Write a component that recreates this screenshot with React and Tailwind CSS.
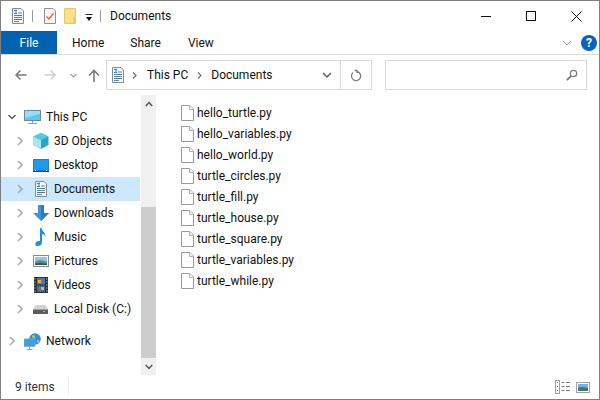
import React from "react";

function DocIcon({ s = 16 }) {
  return (
    <svg width={s} height={s} viewBox="0 0 16 16" className="shrink-0">
      <path d="M2.5 .5H11L13.5 3V15.5H2.5Z" fill="#f7f7f7" stroke="#8a8a8a" />
      <path d="M4 2.5h3M6 1.5v4M4 5.5h3" stroke="#2b88d8" fill="none" />
      <path d="M8 5h4M4 7.5h8M4 9.5h8M4 11.5h8M4 13.5h5" stroke="#4a90c8" />
      <path d="M8 7.5h4M4 11.5h8" stroke="#6a6a6a" />
    </svg>
  );
}

function CheckDoc() {
  return (
    <svg width="14" height="16" viewBox="0 0 14 16">
      <path d="M1.5 .5H10L12.5 3V15.5H1.5Z" fill="#f5f5f5" stroke="#8f8f8f" />
      <path d="M3.5 8.5L6 11L10.5 5.5" fill="none" stroke="#e0603a" strokeWidth="1.4" />
    </svg>
  );
}

function FolderQ() {
  return (
    <svg width="14" height="16" viewBox="0 0 14 16">
      <path d="M.5 .5H11.5V15.5H.5Z" fill="#fbe08c" stroke="#e8c766" />
      <path d="M11.5 6V15.5H9V10Z" fill="#eccb6e" />
    </svg>
  );
}

function PCIcon() {
  return (
    <svg width="17" height="16" viewBox="0 0 17 16" className="shrink-0">
      <rect x=".5" y="1.5" width="16" height="10" fill="#60c5f5" stroke="#6b8a9c" />
      <path d="M1 2h15v3L1 9Z" fill="#9adcf9" />
      <path d="M8.5 12v2M4 14.5h9" stroke="#8fa4b2" strokeWidth="1.2" />
    </svg>
  );
}

function CubeIcon() {
  return (
    <svg width="16" height="16" viewBox="0 0 16 16" className="shrink-0">
      <path d="M8 0L15.5 3.5V12L8 16L.5 12V3.5Z" fill="#1fa7c9" />
      <path d="M.5 3.5L8 7V16L.5 12Z" fill="#a9e7ef" />
      <path d="M8 0L15.5 3.5L8 7L.5 3.5Z" fill="#55c9dc" />
    </svg>
  );
}

function DesktopIcon() {
  return (
    <svg width="16" height="13" viewBox="0 0 16 13" className="shrink-0">
      <rect x="0" y="0" width="16" height="13" fill="#1d7fd3" />
      <rect x="1" y="1" width="14" height="10" fill="#1b9bee" />
      <path d="M0 12.5h16" stroke="#0d4f8c" />
      <path d="M2 11.5h1M13 11.5h1" stroke="#ffffff" />
    </svg>
  );
}

function DownloadIcon() {
  return (
    <svg width="16" height="16" viewBox="0 0 16 16" className="shrink-0">
      <path d="M5 0H11V8H16L8 16L0 8H5Z" fill="#3f94de" />
      <path d="M11 0V8H16L8 16V0Z" fill="#2a7cc7" />
    </svg>
  );
}

function MusicIcon() {
  return (
    <svg width="16" height="18" viewBox="0 0 16 18" className="shrink-0">
      <path d="M7 0H8.5C9 3.5 13 4.5 12.5 9C12 7 10.5 6 9 6V14.5C9 16.5 7 18 4.5 18C2.5 18 2 16.5 2.5 15.2C3.2 13.6 5.5 12.6 7 13.2Z" fill="#1e8fe0" />
    </svg>
  );
}

function PicIcon() {
  return (
    <svg width="16" height="12" viewBox="0 0 16 12" className="shrink-0">
      <rect x=".5" y=".5" width="15" height="11" fill="#fff" stroke="#8a8a8a" />
      <rect x="2" y="2" width="12" height="8" fill="#8fc6ee" />
      <path d="M2 7C5 4.5 9 5 14 7V10H2Z" fill="#5d8f7a" />
      <path d="M2 8.5C6 7.5 10 8 14 8.8V10H2Z" fill="#34566b" />
    </svg>
  );
}

function FilmIcon() {
  return (
    <svg width="14" height="16" viewBox="0 0 14 16" className="shrink-0">
      <rect width="14" height="16" fill="#2e2e2e" />
      <rect x="3" y="1" width="8" height="6.5" fill="#3d7fc0" />
      <rect x="3" y="8.5" width="8" height="6.5" fill="#3d6fa0" />
      <path d="M4 3h3v3H4ZM7 10h3v3H7Z" fill="#e3b53a" />
      <path d="M7 3h3v2H7ZM4 10h2v3H4Z" fill="#b8574a" />
      <path d="M1 1.5v1M1 4.5v1M1 7.5v1M1 10.5v1M1 13.5v1M12.8 1.5v1M12.8 4.5v1M12.8 7.5v1M12.8 10.5v1M12.8 13.5v1" stroke="#e8e8e8" />
    </svg>
  );
}

function DiskIcon() {
  return (
    <svg width="15" height="9" viewBox="0 0 15 9" className="shrink-0">
      <path d="M2.5 0H12.5L15 4.5H0Z" fill="#d2d2d2" />
      <rect x="0" y="4.5" width="15" height="4.5" fill="#5c5c5c" />
      <path d="M10 6.5h2" stroke="#5fe05f" />
    </svg>
  );
}

function NetIcon() {
  return (
    <svg width="17" height="17" viewBox="0 0 17 17" className="shrink-0">
      <circle cx="11" cy="6" r="5.8" fill="#2f8fd8" />
      <path d="M8 2.5C10 1 12 3 11 5C9.5 6 7.5 5 8 2.5ZM13 7C15 6.5 16 8 15 9.5C13.5 10.5 12.5 9 13 7Z" fill="#8fcf7e" />
      <rect x="0" y="6" width="11" height="7.5" fill="#3d9ee0" stroke="#7ca9c8" strokeWidth=".8" />
      <path d="M5.5 14v2M2.5 16.5h6" stroke="#8fa4b2" />
    </svg>
  );
}

function Chevron({ open }) {
  return (
    <svg width="8" height="10" viewBox="0 0 8 10" className="shrink-0">
      {open ? (
        <path d="M.5 3L4 6.5L7.5 3" fill="none" stroke="#5a5a5a" strokeWidth="1.5" />
      ) : (
        <path d="M2 1L6 5L2 9" fill="none" stroke="#a6a6a6" strokeWidth="1.5" />
      )}
    </svg>
  );
}

function PageIcon() {
  return (
    <svg width="13" height="16" viewBox="0 0 13 16" className="shrink-0">
      <path d="M.5 .5H9L12.5 4V15.5H.5Z" fill="#fff" stroke="#9a9a9a" />
      <path d="M8.5 .5V4.5H12.5" fill="#f2f2f2" stroke="#b0b0b0" />
    </svg>
  );
}

function NavRow({ icon, label, selected, indent, open, mt }) {
  return (
    <div className={`flex items-center h-6 ${selected ? "bg-[#cce8ff]" : ""} ${indent ? "pl-[15px]" : "pl-[7px]"} ${mt ? "mt-2" : ""}`}>
      <span className="w-[8px] flex justify-center"><Chevron open={open} /></span>
      <span className="w-[22px] ml-[8px] flex justify-start items-center h-full"><span className="flex w-[17px] justify-center">{icon}</span></span>
      <span className="text-xs text-[#111]">{label}</span>
    </div>
  );
}

const files = ["hello_turtle.py", "hello_variables.py", "hello_world.py", "turtle_circles.py", "turtle_fill.py", "turtle_house.py", "turtle_square.py", "turtle_variables.py", "turtle_while.py"];

export default function App() {
  return (
    <div className="w-[600px] h-[400px] bg-white border border-[#7f7f7f] flex flex-col overflow-hidden font-['Roboto',sans-serif] text-[#111]">
      <div className="h-[30px] flex items-center shrink-0">
        <span className="ml-[9px] flex"><DocIcon /></span>
        <span className="ml-[6px] w-px h-3 bg-[#9a9a9a]" />
        <span className="ml-[10px] flex"><CheckDoc /></span>
        <span className="ml-[7px] flex"><FolderQ /></span>
        <svg width="8" height="8" viewBox="0 0 8 8" className="ml-[7px] mt-[3px]"><path d="M.5 .5h7" stroke="#222" /><path d="M1 3h6L4 7Z" fill="#111" /></svg>
        <span className="ml-[7px] w-px h-3 bg-[#9a9a9a]" />
        <span className="ml-[9px] text-xs">Documents</span>
        <div className="ml-auto flex items-center">
          <svg width="11" height="11" viewBox="0 0 11 11"><path d="M0 5.5h10" stroke="#111" /></svg>
          <svg width="10" height="10" viewBox="0 0 10 10" className="ml-[34px]"><rect x=".5" y=".5" width="9" height="9" fill="none" stroke="#111" /></svg>
          <svg width="11" height="11" viewBox="0 0 11 11" className="ml-[35px] mr-[17px]"><path d="M.5 .5L10.5 10.5M10.5 .5L.5 10.5" stroke="#111" /></svg>
        </div>
      </div>
      <div className="h-[24px] flex items-center shrink-0 border-b border-[#dadbdc] relative">
        <div className="w-[56px] h-[23px] bg-[#0063b1] text-white text-xs flex items-center justify-center">File</div>
        <span className="ml-[15px] text-xs">Home</span>
        <span className="ml-[26px] text-xs">Share</span>
        <span className="ml-[27px] text-xs">View</span>
        <div className="ml-auto mr-[2px] flex items-center">
          <svg width="10" height="6" viewBox="0 0 10 6"><path d="M1 1L5 5L9 1" fill="none" stroke="#a8a8a8" /></svg>
          <span className="ml-[9px] w-4 h-4 rounded-full bg-[#0a63c0] text-white text-[12px] font-bold flex items-center justify-center">?</span>
        </div>
      </div>
      <div className="h-[40px] flex items-center shrink-0">
        <svg width="13" height="12" viewBox="0 0 13 12" className="ml-[13px]"><path d="M12.5 6H2M6.5 1.5L2 6L6.5 10.5" fill="none" stroke="#7a7a7a" strokeWidth="1.5" /></svg>
        <svg width="13" height="12" viewBox="0 0 13 12" className="ml-[17px]"><path d="M.5 6H11M6.5 1.5L11 6L6.5 10.5" fill="none" stroke="#d0d0d0" strokeWidth="1.5" /></svg>
        <svg width="7" height="5" viewBox="0 0 7 5" className="ml-[13px]"><path d="M.5 1L3.5 4L6.5 1" fill="none" stroke="#a0a0a0" strokeWidth="1.2" /></svg>
        <svg width="12" height="13" viewBox="0 0 12 13" className="ml-[11px]"><path d="M6 13V2M1 6.5L6 1.5L11 6.5" fill="none" stroke="#7a7a7a" strokeWidth="1.6" /></svg>
        <div className="ml-[6px] w-[266px] h-[30px] border border-[#d9d9d9] flex items-center">
          <span className="ml-[3px] flex"><DocIcon /></span>
          <svg width="5" height="7" viewBox="0 0 5 7" className="ml-[6px]"><path d="M1 .5L4 3.5L1 6.5" fill="none" stroke="#707070" strokeWidth="1.2" /></svg>
          <span className="ml-[10px] text-xs">This PC</span>
          <svg width="5" height="7" viewBox="0 0 5 7" className="ml-[9px]"><path d="M1 .5L4 3.5L1 6.5" fill="none" stroke="#707070" strokeWidth="1.2" /></svg>
          <span className="ml-[9px] text-xs">Documents</span>
          <svg width="10" height="6" viewBox="0 0 10 6" className="ml-auto mr-[8px]"><path d="M1 1L5 5L9 1" fill="none" stroke="#5a5a5a" strokeWidth="1.4" /></svg>
          <span className="w-px h-full bg-[#d9d9d9]" />
          <svg width="12" height="13" viewBox="0 0 12 13" className="ml-[9px] mr-[9px]"><path d="M4.5 1.5H7V4M7 2.5A4.6 4.6 0 1 1 3 3.6" fill="none" stroke="#7d7d7d" strokeWidth="1.3" /></svg>
        </div>
        <div className="w-[202px] h-[30px] border border-[#d9d9d9] ml-auto mr-[12px] flex items-center justify-end pr-[8px]">
          <svg width="12" height="12" viewBox="0 0 12 12"><circle cx="7.5" cy="4.5" r="3.2" fill="none" stroke="#7d7d7d" strokeWidth="1.3" /><path d="M5 7L.8 11.2" stroke="#7d7d7d" strokeWidth="1.8" /></svg>
        </div>
      </div>
      <div className="flex-1 flex min-h-0">
        <div className="w-[139px] mr-px shrink-0 pt-[10px]">
          <NavRow icon={<PCIcon />} label="This PC" open />
          <NavRow indent icon={<CubeIcon />} label="3D Objects" />
          <NavRow indent icon={<DesktopIcon />} label="Desktop" />
          <NavRow indent selected icon={<DocIcon />} label="Documents" />
          <NavRow indent icon={<DownloadIcon />} label="Downloads" />
          <NavRow indent icon={<MusicIcon />} label="Music" />
          <NavRow indent icon={<PicIcon />} label="Pictures" />
          <NavRow indent icon={<FilmIcon />} label="Videos" />
          <NavRow indent icon={<DiskIcon />} label="Local Disk (C:)" />
          <NavRow icon={<NetIcon />} label="Network" mt />
        </div>
        <div className="w-[15px] shrink-0 bg-[#f0f0f0] flex flex-col">
          <div className="h-[17px] flex items-center justify-center"><svg width="8" height="6" viewBox="0 0 8 6"><path d="M.8 5L4 1.5L7.2 5" fill="none" stroke="#555" strokeWidth="1.5" /></svg></div>
          <div className="h-[95px]" />
          <div className="flex-1 bg-[#cdcdcd]" />
          <div className="h-[17px] flex items-center justify-center"><svg width="8" height="6" viewBox="0 0 8 6"><path d="M.8 1L4 4.5L7.2 1" fill="none" stroke="#555" strokeWidth="1.5" /></svg></div>
        </div>
        <div className="flex-1 pl-[25px] pt-[7px]">
          {files.map((f) => (
            <div key={f} className="h-[21px] flex items-center">
              <PageIcon />
              <span className="ml-[3px] text-xs">{f}</span>
            </div>
          ))}
        </div>
      </div>
      <div className="h-[24px] shrink-0 flex items-center">
        <span className="ml-[14px] text-xs text-[#333]">9 items</span>
        <span className="ml-[13px] w-px h-4 bg-[#eeeeee]" />
        <div className="ml-auto mr-[9px] flex items-center">
          <svg width="16" height="14" viewBox="0 0 16 14"><rect x=".5" y=".5" width="4" height="13" fill="#fff" stroke="#a0a0a0" /><path d="M2 2.5h1" stroke="#58a858" /><path d="M2 6.5h1" stroke="#4a9be0" /><path d="M2 10.5h1" stroke="#d03030" /><path d="M6.5 2.5h3M11 2.5h4M6.5 6.5h3M11 6.5h4M6.5 10.5h3M11 10.5h4" stroke="#7a7a7a" /></svg>
          <svg width="14" height="11" viewBox="0 0 14 11" className="ml-[5px]"><rect x=".5" y=".5" width="13" height="10" fill="#fff" stroke="#a0a0a0" /><rect x="2" y="2" width="10" height="7" fill="#6fb4ea" /><path d="M2 6C5 4.5 9 5 12 6V9H2Z" fill="#4d7464" /></svg>
        </div>
      </div>
    </div>
  );
}
